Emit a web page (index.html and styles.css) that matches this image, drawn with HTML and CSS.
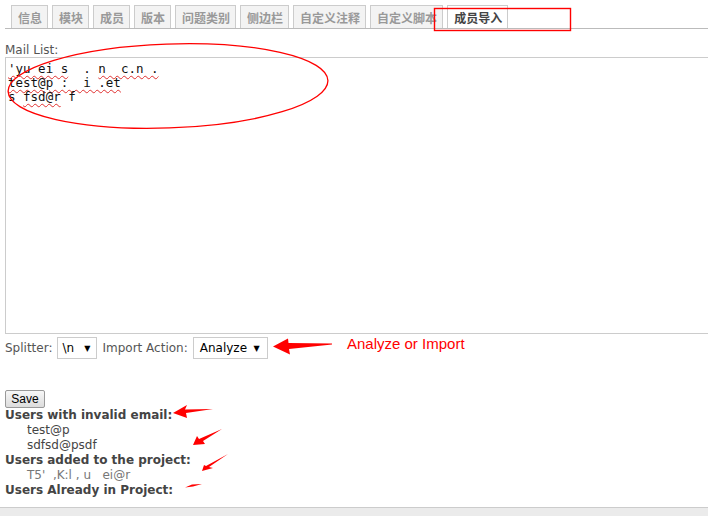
FILE: index.html
```html
<!DOCTYPE html>
<html>
<head>
<meta charset="utf-8">
<title>成员导入</title>
<link rel="stylesheet" href="styles.css">
</head>
<body>
<div class="page">
  <div class="tabs">
    <span class="tab">信息</span>
    <span class="tab">模块</span>
    <span class="tab">成员</span>
    <span class="tab">版本</span>
    <span class="tab">问题类别</span>
    <span class="tab">侧边栏</span>
    <span class="tab">自定义注释</span>
    <span class="tab">自定义脚本</span>
    <span class="tab active">成员导入</span>
  </div>

  <div class="label">Mail List:</div>
  <div class="mailbox"><div class="ml"><span class="sp">'yu ei s</span>  . <span class="sp">n  c.n .</span></div><div class="ml"><span class="sp">test@p :  i .et</span></div><div class="ml">s <span class="sp">fsd@r</span> f</div></div>

  <div class="controls">
    <span class="ctl-label">Splitter:</span>
    <span class="select sel-split"><span class="val">\n</span><span class="caret">▼</span></span>
    <span class="ctl-label">Import Action:</span>
    <span class="select sel-action"><span class="val">Analyze</span><span class="caret">▼</span></span>
  </div>

  <button class="save">Save</button>

  <div class="results">
    <div class="res-head">Users with invalid email:</div>
    <div class="res-item">test@p</div>
    <div class="res-item">sdfsd@psdf</div>
    <div class="res-head">Users added to the project:</div>
    <div class="res-item blur">T5'  ,K:l , u   ei@r</div>
    <div class="res-head">Users Already in Project:</div>
  </div>
</div>
<div class="footer"></div>

<svg class="annot" width="708" height="516" viewBox="0 0 708 516">
  <rect x="434.5" y="8.5" width="136" height="22" fill="none" stroke="#f00" stroke-width="1.4"/>
  <ellipse cx="168" cy="86" rx="160" ry="42" transform="rotate(-2 168 86)" fill="none" stroke="#f00" stroke-width="1.3"/>
  <polygon points="273,346.5 288,338.5 288.5,343 332,343.5 332,344.5 289,349 290,354.5" fill="#f00"/>
  <polygon points="173,413 187,405 185,409.5 213,409 186,413 187,418" fill="#f00"/>
  <polygon points="193,445 197,436 199,439 222,429 203,441 205,444" fill="#f00"/>
  <polygon points="202,471 204,465 206,466 228,454 209,467 213,468" fill="#f00"/>
  <polygon points="185,487.5 192,484.5 202,484 193,486.5" fill="#f00"/>
</svg>
<span class="annot-text">Analyze or Import</span>
</body>
</html>
```
FILE: styles.css
```css
html, body {
  margin: 0;
  padding: 0;
  overflow: hidden;
  width: 708px;
  height: 516px;
  background: #fff;
  font-family: "DejaVu Sans", Verdana, sans-serif;
  font-size: 12px;
  color: #555;
}

.page {
  padding: 5px 0 0 5px;
}

.tabs {
  display: flex;
  gap: 4px;
  padding-left: 6px;
  border-bottom: 1px solid #bbb;
  height: 23px;
  align-items: flex-end;
}

.tab {
  display: block;
  border: 1px solid #ccc;
  border-bottom: none;
  background: #f3f3f3;
  color: #999;
  font-family: "Noto Sans CJK SC", sans-serif;
  font-weight: bold;
  font-size: 12px;
  line-height: 20px;
  box-sizing: border-box;
  padding: 2px 5px 0 6px;
  height: 23px;
  white-space: nowrap;
}

.tab.active {
  background: #fff;
  color: #444;
}

.label {
  margin-top: 14px;
  line-height: 14px;
  color: #555;
}

.mailbox {
  width: 740px;
  height: 277px;
  box-sizing: border-box;
  border: 1px solid #ccc;
  padding: 4px 2px;
  font-family: "DejaVu Sans Mono", monospace;
  font-size: 12.5px;
  line-height: 14px;
  color: #111;
  white-space: pre;
}

.sp {
  text-decoration: underline wavy #e03030;
  text-decoration-thickness: 1px;
  text-underline-offset: 2px;
}

.controls {
  display: flex;
  align-items: center;
  gap: 5px;
  margin-top: 3px;
  height: 22px;
}

.ctl-label {
  color: #555;
}

.select {
  display: flex;
  align-items: center;
  justify-content: space-between;
  height: 22px;
  box-sizing: border-box;
  border: 1px solid #ccc;
  background: #fff;
  color: #000;
  font-size: 12px;
}

.sel-split {
  width: 40px;
  padding: 0 6px 0 4px;
}

.sel-action {
  width: 75px;
  padding: 0 7px 0 6px;
}

.caret {
  font-size: 8px;
  color: #000;
}

.save {
  display: block;
  margin: 31px 0 0 0;
  width: 40px;
  height: 18px;
  box-sizing: border-box;
  padding: 0;
  border: 1px solid #999;
  border-radius: 2px;
  background: linear-gradient(#f7f7f7, #dcdcdc);
  font-family: "Liberation Sans", Arial, sans-serif;
  font-size: 12px;
  line-height: 16px;
  color: #000;
}

.results {
  line-height: 15px;
}

.res-head {
  font-weight: bold;
  font-size: 12px;
  color: #444;
}

.res-item {
  padding-left: 22px;
  color: #444;
}

.res-item.blur {
  color: #777;
  white-space: pre;
}

.footer {
  position: absolute;
  left: 0;
  right: 0;
  bottom: 0;
  height: 8px;
  border-top: 1px solid #ccc;
  background: #ebebeb;
}

.annot {
  position: absolute;
  left: 0;
  top: 0;
  pointer-events: none;
}

.annot-text {
  position: absolute;
  left: 347px;
  top: 335px;
  font-family: "Liberation Sans", Arial, sans-serif;
  font-size: 15px;
  line-height: 18px;
  color: #f00;
}
```
